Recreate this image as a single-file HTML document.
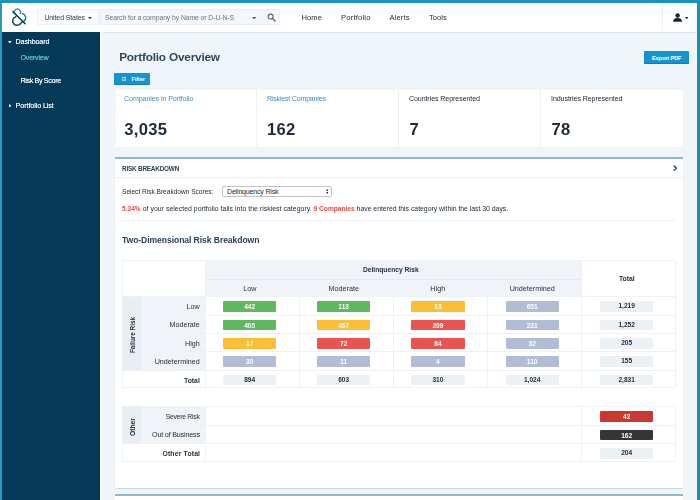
<!DOCTYPE html>
<html lang="en">
<head>
<meta charset="utf-8">
<title>Portfolio Overview</title>
<style>
*{box-sizing:border-box;margin:0;padding:0}
html,body{width:700px;height:500px;overflow:hidden}
body{position:relative;background:#f0f5f9;font-family:"Liberation Sans",sans-serif;color:#1f2d3a;font-size:7px;line-height:1}
.abs,.abs>*{position:absolute}
#root{left:0;top:0;width:700px;height:500px;filter:blur(.5px)}
.t{position:absolute;white-space:nowrap;line-height:10px;height:10px;margin-top:-5px}
.r{text-align:right}
.c{text-align:center}
.b{font-weight:bold}
/* frame */
#fl{left:-6px;top:-6px;width:8.3px;height:512px;background:#2796c2}
#ft{left:-6px;top:-6px;width:712px;height:8.7px;background:#1b93bf}
#fr{left:697.15px;top:-6px;width:9px;height:512px;background:#1b8fbb}
#fw{left:695.6px;top:31px;width:1.6px;height:475px;background:#fbfdff}
/* header */
#hd{left:2px;top:2px;width:695.5px;height:29.5px;background:#fff;box-shadow:0 0.5px 1.5px rgba(60,80,100,.35)}
#side{left:2px;top:31.9px;width:98.3px;height:476px;background:#043a58}
#sidew{left:100.3px;top:32px;width:2.6px;height:476px;background:#f6f9fc}
.nav{font-size:7.6px;color:#1d2832}
.sb{font-size:7.2px;color:#fff;letter-spacing:-.1px;text-shadow:0 0 .4px rgba(255,255,255,.7)}
.card{top:89.6px;height:57.8px;width:141.85px;background:#fff;border-right:.9px solid #edf1f5}
.cl{font-size:7.1px;letter-spacing:-.09px;color:#222c36}
.cl.lk{color:#3d8ebd}
.cv{font-size:16.6px;font-weight:bold;letter-spacing:.3px;color:#1d2b38;line-height:20px;height:20px;margin-top:-10px}
.btn{background:#1394cf;border-bottom:1px solid #0f7fb4;border-radius:1px;color:#fff;font-weight:bold;font-size:6.2px}
.panel{background:#fff;border-top:2px solid #8bbccb}
.hl{background:#eef1f6;height:.8px}
.vl{background:#eef1f6;width:.8px}
.bd{height:10.5px;width:53.3px;border-radius:1px;color:#fff;font-weight:bold;font-size:6.6px;line-height:11.3px;overflow:hidden;text-align:center}
.g{background:#5cb95c}.y{background:#fcbe35}.rd{background:#ea5450}.gb{background:#b1bdd5}
.tt{background:#ecf1f6;color:#223140;line-height:10.7px}
.dr{background:#c9392f}.dk{background:#333536}
.rl{font-size:7.2px;color:#242e38}
</style>
</head>
<body>
<div class="abs" id="root">
  <!-- header -->
  <div id="hd"></div>
  <div id="side"></div>
  <div id="sidew"></div>

  <!-- logo -->
  <svg style="left:0;top:0" width="40" height="32" viewBox="0 0 40 32" fill="none" stroke-linecap="round">
    <path d="M14.2 13.5 A3.3 3.3 0 1 1 20.3 13.7" stroke="#3a8fc0" stroke-width="1.4"/>
    <path d="M22.3 13.6 A4.3 4.3 0 0 1 23.4 21.6" stroke="#2c7397" stroke-width="1.4"/>
    <path d="M15.9 16.8 A4.35 4.35 0 1 0 20.6 23.5 Q21.8 22.6 22.4 21.6" stroke="#0e4a63" stroke-width="1.5"/>
    <path d="M12.9 11.6 L25.1 23.7" stroke="#0c3c55" stroke-width="1.5"/>
  </svg>

  <!-- country + search -->
  <div style="left:37px;top:8.7px;width:62px;height:16.4px;background:#fbfcfd;border:.6px solid #eef1f5;border-radius:1px"></div>
  <div style="left:99px;top:8.7px;width:181px;height:16.4px;background:#f4f7fa;border:.6px solid #ebeff3;border-radius:1px"></div>
  <div class="t nav m" style="left:44.4px;top:17.8px;font-size:7px;letter-spacing:-.12px;color:#34404b">United States</div>
  <svg style="left:88px;top:16.9px" width="3.8" height="2.5" viewBox="0 0 5 3"><path d="M0 0H5L2.5 3Z" fill="#3a4650"/></svg>
  <div class="t m" style="left:105px;top:17.5px;font-size:6.9px;letter-spacing:-.11px;color:#697581">Search for a company by Name or D-U-N-S</div>
  <svg style="left:252.2px;top:16.5px" width="4.4" height="2.6" viewBox="0 0 5 3"><path d="M0 0H5L2.5 3Z" fill="#56626e"/></svg>
  <svg style="left:266.5px;top:12.6px" width="9" height="9" viewBox="0 0 9 9"><circle cx="3.6" cy="3.6" r="2.5" fill="none" stroke="#56626e" stroke-width="1.1"/><path d="M5.5 5.5L8 8" stroke="#56626e" stroke-width="1.3" stroke-linecap="round"/></svg>

  <!-- nav -->
  <div class="t nav m" style="left:301.6px;top:18.1px">Home</div>
  <div class="t nav m" style="left:341px;top:18.1px;letter-spacing:.2px">Portfolio</div>
  <div class="t nav m" style="left:389.6px;top:18.1px;letter-spacing:.1px">Alerts</div>
  <div class="t nav m" style="left:429px;top:18.1px">Tools</div>

  <!-- user -->
  <div style="left:662.4px;top:2.4px;width:34.8px;height:29px;background:#fcfdfe;border-left:.6px solid #eef1f4"></div>
  <svg style="left:672.8px;top:12.7px" width="9.2" height="8.9" viewBox="0 0 10 9.4"><circle cx="5" cy="2.5" r="2.4" fill="#12222f"/><path d="M0.2 9.4C0.2 6.6 2 5.4 5 5.4C8 5.4 9.8 6.6 9.8 9.4Z" fill="#12222f"/></svg>
  <svg style="left:684.9px;top:17.1px" width="3.4" height="2.3" viewBox="0 0 4 2.6"><path d="M0 0H4L2 2.6Z" fill="#12222f"/></svg>

  <!-- sidebar -->
  <svg style="left:8.2px;top:40.8px" width="3.6" height="2.6" viewBox="0 0 3.6 2.6"><path d="M0 0H3.6L1.8 2.6Z" fill="#fff"/></svg>
  <div class="t sb m" style="left:15.6px;top:42.4px;letter-spacing:-.17px">Dashboard</div>
  <div class="t sb m" style="left:20.4px;top:58.1px;letter-spacing:-.22px;color:#29c0b1">Overview</div>
  <div class="t sb m" style="left:20.4px;top:80.5px;letter-spacing:-.36px">Risk By Score</div>
  <svg style="left:8.8px;top:103.9px" width="2.6" height="3.6" viewBox="0 0 2.6 3.6"><path d="M0 0V3.6L2.6 1.8Z" fill="#fff"/></svg>
  <div class="t sb m" style="left:15.6px;top:106.4px">Portfolio List</div>

  <!-- title -->
  <div class="t b m" style="left:119.2px;top:57.3px;font-size:11.8px;letter-spacing:-.2px;line-height:14px;height:14px;margin-top:-7px;color:#2a4860">Portfolio Overview</div>
  <div class="btn" style="left:643.8px;top:51.4px;width:45px;height:12.8px"></div>
  <div class="t b m" style="left:651.9px;top:58px;font-size:5.8px;letter-spacing:-.2px;color:#fff">Export PDF</div>
  <div class="btn" style="left:114.3px;top:72.5px;width:35.7px;height:12.6px"></div>
  <svg style="left:121.8px;top:76.6px" width="4.4" height="4.2" viewBox="0 0 4.4 4.2"><path d="M0 .5H1M1.6 .5H4.4M0 2.1H1M1.6 2.1H4.4M0 3.7H1M1.6 3.7H4.4" stroke="#fff" stroke-width=".8"/></svg>
  <div class="t b m" style="left:131.6px;top:78.8px;font-size:5.8px;letter-spacing:-.1px;color:#fff">Filter</div>

  <!-- cards -->
  <div class="card" style="left:115.6px"></div>
  <div class="card" style="left:257.45px"></div>
  <div class="card" style="left:399.3px"></div>
  <div class="card" style="left:541.15px;border-right:none"></div>
  <div class="t cl lk m" style="left:124px;top:98.6px">Companies in Portfolio</div>
  <div class="t cl lk m" style="left:267px;top:98.6px;letter-spacing:-.22px">Riskiest Companies</div>
  <div class="t cl m" style="left:408.9px;top:98.6px">Countries Represented</div>
  <div class="t cl m" style="left:551px;top:98.6px">Industries Represented</div>
  <div class="t cv m" style="left:124.2px;top:130px">3,035</div>
  <div class="t cv m" style="left:267px;top:130px">162</div>
  <div class="t cv m" style="left:409.4px;top:130px">7</div>
  <div class="t cv m" style="left:551.5px;top:130px">78</div>

  <!-- risk panel -->
  <div class="panel" style="left:115px;top:157.4px;width:568.2px;height:330.9px;box-shadow:0 .5px 1px rgba(100,120,140,.25)"></div>
  <div class="t b m" style="left:122px;top:168.6px;font-size:6.4px;letter-spacing:-.21px;color:#2a4256">RISK BREAKDOWN</div>
  <svg style="left:672.6px;top:164.7px" width="4.4" height="6.4" viewBox="0 0 4.4 6.4"><path d="M.7 .7L3.5 3.2L.7 5.7" fill="none" stroke="#26323d" stroke-width="1.2"/></svg>
  <div class="hl" style="left:115px;top:177.1px;width:568.2px"></div>
  <div class="t m" style="left:122px;top:192.1px;font-size:6.6px;letter-spacing:-.02px;color:#222c36">Select Risk Breakdown Scores:</div>
  <div style="left:222.4px;top:186px;width:109.4px;height:10.6px;background:#fff;border:.8px solid #c0c3c7;border-radius:2px"></div>
  <div class="t m" style="left:227px;top:192.1px;font-size:7px;letter-spacing:-.17px;color:#1d2730">Delinquency Risk</div>
  <svg style="left:325.5px;top:188.8px" width="2.7" height="5" viewBox="0 0 3.2 5.8"><path d="M0 2.3L1.6 0L3.2 2.3ZM0 3.5L1.6 5.8L3.2 3.5Z" fill="#333"/></svg>
  <div class="t m" style="left:122px;top:208.6px;font-size:6.9px;letter-spacing:.005px;color:#222c36"><b style="color:#e04a3f;font-size:6.6px">5.34%</b><span style="letter-spacing:.035px"> of your selected portfolio falls into the riskiest category. </span><b style="color:#e04a3f;font-size:6.6px">9 Companies</b><span style="letter-spacing:-.025px"> have entered this category within the last 30 days.</span></div>
  <div class="hl" style="left:122px;top:220px;width:554px"></div>
  <div class="t b m" style="left:122px;top:240.2px;font-size:8.6px;letter-spacing:-.08px;color:#29435a;line-height:12px;height:12px;margin-top:-6px">Two-Dimensional Risk Breakdown</div>

  <!-- table 1 backgrounds -->
  <div style="left:122px;top:259.8px;width:554.4px;height:128.2px;border:.7px solid #eff2f6"></div>
  <div style="left:205px;top:260px;width:376.6px;height:36.4px;background:#f0f4f8"></div>
  <div style="left:122px;top:296.4px;width:19.2px;height:73.2px;background:#e9eef4"></div>
  <div style="left:141.2px;top:296.4px;width:63.8px;height:73.2px;background:#f0f4f8"></div>
  <!-- lines -->
  <div class="hl" style="left:205px;top:279.4px;width:376.6px;background:#e3e9ef"></div>
  <div class="hl" style="left:122px;top:296.2px;width:554px"></div>
  <div class="hl" style="left:141.4px;top:314.6px;width:534.6px"></div>
  <div class="hl" style="left:141.4px;top:333px;width:534.6px"></div>
  <div class="hl" style="left:141.4px;top:351.3px;width:534.6px"></div>
  <div class="hl" style="left:122px;top:369.5px;width:554px"></div>
  <div class="vl" style="left:204.8px;top:260px;height:128.4px"></div>
  <div class="vl" style="left:299.2px;top:279.6px;height:108.8px"></div>
  <div class="vl" style="left:393.2px;top:279.6px;height:108.8px"></div>
  <div class="vl" style="left:487.2px;top:279.6px;height:108.8px"></div>
  <div class="vl" style="left:581.4px;top:260px;height:128.4px"></div>
  <!-- header texts -->
  <div class="t b c m" style="left:202.8px;width:376px;top:269.8px;font-size:6.7px;color:#223140">Delinquency Risk</div>
  <div class="t c rl m" style="left:223px;width:53.5px;top:288.6px">Low</div>
  <div class="t c rl m" style="left:317px;width:53.5px;top:288.6px">Moderate</div>
  <div class="t c rl m" style="left:411px;width:53.5px;top:288.6px">High</div>
  <div class="t c rl m" style="left:505.5px;width:53.5px;top:288.6px">Undetermined</div>
  <div class="t b c m" style="left:600px;width:53.5px;top:278.6px;font-size:6.8px;color:#223140">Total</div>
  <!-- row labels -->
  <div class="t b m" style="left:132.6px;top:335.2px;font-size:6.4px;color:#223140;transform:translate(-50%,0) rotate(-90deg);transform-origin:50% 50%">Failure Risk</div>
  <div class="t r rl m" style="left:141px;width:58.8px;top:307px">Low</div>
  <div class="t r rl m" style="left:141px;width:58.8px;top:325.2px">Moderate</div>
  <div class="t r rl m" style="left:141px;width:58.8px;top:343.6px">High</div>
  <div class="t r rl m" style="left:141px;width:58.8px;top:361.8px">Undetermined</div>
  <div class="t r b m" style="left:141px;width:58.8px;top:380.5px;font-size:6.8px;color:#223140">Total</div>

  <!-- badges row1 -->
  <div class="bd g" style="left:223px;top:301.2px">442</div>
  <div class="bd g" style="left:317px;top:301.2px">113</div>
  <div class="bd y" style="left:411.3px;top:301.2px">13</div>
  <div class="bd gb" style="left:505.5px;top:301.2px">651</div>
  <div class="bd tt" style="left:600px;top:301.2px">1,219</div>
  <!-- row2 -->
  <div class="bd g" style="left:223px;top:319.6px">405</div>
  <div class="bd y" style="left:317px;top:319.6px">467</div>
  <div class="bd rd" style="left:411.3px;top:319.6px">209</div>
  <div class="bd gb" style="left:505.5px;top:319.6px">231</div>
  <div class="bd tt" style="left:600px;top:319.6px">1,252</div>
  <!-- row3 -->
  <div class="bd y" style="left:223px;top:338px">17</div>
  <div class="bd rd" style="left:317px;top:338px">72</div>
  <div class="bd rd" style="left:411.3px;top:338px">84</div>
  <div class="bd gb" style="left:505.5px;top:338px">32</div>
  <div class="bd tt" style="left:600px;top:338px">205</div>
  <!-- row4 -->
  <div class="bd gb" style="left:223px;top:356.4px">30</div>
  <div class="bd gb" style="left:317px;top:356.4px">11</div>
  <div class="bd gb" style="left:411.3px;top:356.4px">4</div>
  <div class="bd gb" style="left:505.5px;top:356.4px">110</div>
  <div class="bd tt" style="left:600px;top:356.4px">155</div>
  <!-- total row -->
  <div class="bd tt" style="left:223px;top:374.8px">894</div>
  <div class="bd tt" style="left:317px;top:374.8px">603</div>
  <div class="bd tt" style="left:411.3px;top:374.8px">310</div>
  <div class="bd tt" style="left:505.5px;top:374.8px">1,024</div>
  <div class="bd tt" style="left:600px;top:374.8px">2,831</div>

  <!-- table 2 -->
  <div style="left:122px;top:406px;width:554.4px;height:55.8px;border:.7px solid #eff2f6"></div>
  <div style="left:122px;top:406.4px;width:19.2px;height:36.6px;background:#e9eef4"></div>
  <div style="left:141.2px;top:406.4px;width:63.8px;height:36.6px;background:#f0f4f8"></div>
  <div class="hl" style="left:141.4px;top:424.9px;width:534.6px"></div>
  <div class="hl" style="left:122px;top:442.9px;width:554px"></div>
  <div class="vl" style="left:204.8px;top:406px;height:55.6px"></div>
  <div class="vl" style="left:581.4px;top:406px;height:55.6px"></div>
  <div class="t b m" style="left:132.6px;top:427px;font-size:6.7px;color:#223140;transform:translate(-50%,0) rotate(-90deg);transform-origin:50% 50%">Other</div>
  <div class="t r rl m" style="left:141px;width:58.8px;top:417.2px;font-size:6.8px;letter-spacing:-.25px;padding-right:.25px">Severe Risk</div>
  <div class="t r rl m" style="left:141px;width:58.8px;top:435.4px;letter-spacing:-.2px">Out of Business</div>
  <div class="t r b m" style="left:141.4px;width:58.8px;top:453.6px;font-size:6.8px;letter-spacing:.18px;color:#223140">Other Total</div>
  <div class="bd dr" style="left:600px;top:411.2px">42</div>
  <div class="bd dk" style="left:600px;top:429.8px">162</div>
  <div class="bd tt" style="left:600px;top:448.2px">204</div>

  <!-- next panel -->
  <div class="panel" style="left:115px;top:494.3px;width:568.2px;height:16px"></div>

  <!-- frame on top -->
  <div id="fw"></div>
  <div id="fl"></div><div id="ft"></div><div id="fr"></div>
</div>
</body>
</html>
